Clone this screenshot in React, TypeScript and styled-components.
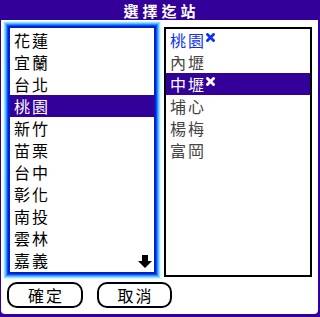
import styled, { createGlobalStyle } from 'styled-components';

const GlobalStyle = createGlobalStyle`
  html, body {
    margin: 0;
    padding: 0;
    background: #fff;
  }
  body {
    font-family: "Noto Sans CJK TC", "Noto Sans", sans-serif;
  }
`;

const PURPLE = '#330099';

const Frame = styled.div`
  width: 320px;
  height: 317px;
  box-sizing: border-box;
  background: ${PURPLE};
  display: flex;
  flex-direction: column;
  padding: 0 2px 3px 1px;
`;

const TitleBar = styled.h1`
  margin: 0;
  height: 20px;
  display: flex;
  align-items: center;
  justify-content: center;
  color: #fff;
  font-size: 15px;
  line-height: 17px;
  font-weight: 700;
  letter-spacing: 4px;
  padding-left: 4px;
`;

const Body = styled.div`
  flex: 1;
  background: #fff;
  border-radius: 0 0 4px 4px;
  display: flex;
  flex-direction: column;
  padding: 6px 6px 0 7px;
`;

const ListsRow = styled.div`
  display: flex;
  align-items: flex-start;
  gap: 8px;
`;

const PickList = styled.div`
  position: relative;
  width: 148px;
  height: 248px;
  box-sizing: border-box;
  border: 2px solid #0022cc;
  padding: 1px 0;
  box-shadow:
    0 0 0 1px #0055ff,
    0 0 0 2px #3388ff,
    0 0 0 3px #66bbff,
    0 0 0 4px #99ddff,
    0 0 0 5px #ccffff;
`;

const StationList = styled.div`
  width: 148px;
  height: 250px;
  box-sizing: border-box;
  border: 2px solid #000;
  margin-top: 1px;
`;

const toneColor = {
  black: '#000',
  gray: '#444',
  blue: '#1030f0',
};

const Row = styled.div<{ $selected?: boolean; $tone?: keyof typeof toneColor }>`
  height: 22px;
  display: flex;
  align-items: center;
  padding-left: 4px;
  font-size: 16px;
  line-height: 22px;
  letter-spacing: 2px;
  background: ${(p) => (p.$selected ? PURPLE : 'transparent')};
  color: ${(p) => (p.$selected ? '#fff' : toneColor[p.$tone ?? 'black'])};
`;

const Mark = styled.svg`
  align-self: flex-start;
  margin: 4px 0 0 0;
`;

const ScrollArrow = styled.svg`
  position: absolute;
  right: 2px;
  bottom: 4px;
`;

const ButtonRow = styled.div`
  display: flex;
  gap: 14px;
  margin: 5px 0 0 -1px;
`;

const PillButton = styled.button<{ $width: number }>`
  width: ${(p) => p.$width}px;
  height: 26px;
  box-sizing: border-box;
  border: 2px solid #000;
  border-radius: 10px;
  background: #fff;
  color: #000;
  padding: 0 0 0 2px;
  font-family: inherit;
  font-size: 16px;
  line-height: 22px;
  letter-spacing: 2px;
`;

const leftItems = ['花蓮', '宜蘭', '台北', '桃園', '新竹', '苗栗', '台中', '彰化', '南投', '雲林', '嘉義'];

const rightItems: { name: string; tone: keyof typeof toneColor; marked?: boolean; selected?: boolean }[] = [
  { name: '桃園', tone: 'blue', marked: true },
  { name: '內壢', tone: 'gray' },
  { name: '中壢', tone: 'gray', marked: true, selected: true },
  { name: '埔心', tone: 'gray' },
  { name: '楊梅', tone: 'gray' },
  { name: '富岡', tone: 'gray' },
];

const CrossMark = () => (
  <Mark width="9" height="9" viewBox="0 0 9 9">
    <path d="M1.5 1.5 L7.5 7.5 M7.5 1.5 L1.5 7.5" stroke="currentColor" strokeWidth="2.8" strokeLinecap="square" />
  </Mark>
);

export default function App() {
  return (
    <>
      <GlobalStyle />
      <Frame>
        <TitleBar>選擇迄站</TitleBar>
        <Body>
          <ListsRow>
            <PickList>
              {leftItems.map((name) => (
                <Row key={name} $selected={name === '桃園'}>
                  {name}
                </Row>
              ))}
              <ScrollArrow width="14" height="13" viewBox="0 0 14 13">
                <polygon points="4,0 10,0 10,6 14,6 7,13 0,6 4,6" fill="#000" />
              </ScrollArrow>
            </PickList>
            <StationList>
              {rightItems.map((item) => (
                <Row key={item.name} $tone={item.tone} $selected={item.selected}>
                  {item.name}
                  {item.marked && <CrossMark />}
                </Row>
              ))}
            </StationList>
          </ListsRow>
          <ButtonRow>
            <PillButton $width={76}>確定</PillButton>
            <PillButton $width={75}>取消</PillButton>
          </ButtonRow>
        </Body>
      </Frame>
    </>
  );
}
